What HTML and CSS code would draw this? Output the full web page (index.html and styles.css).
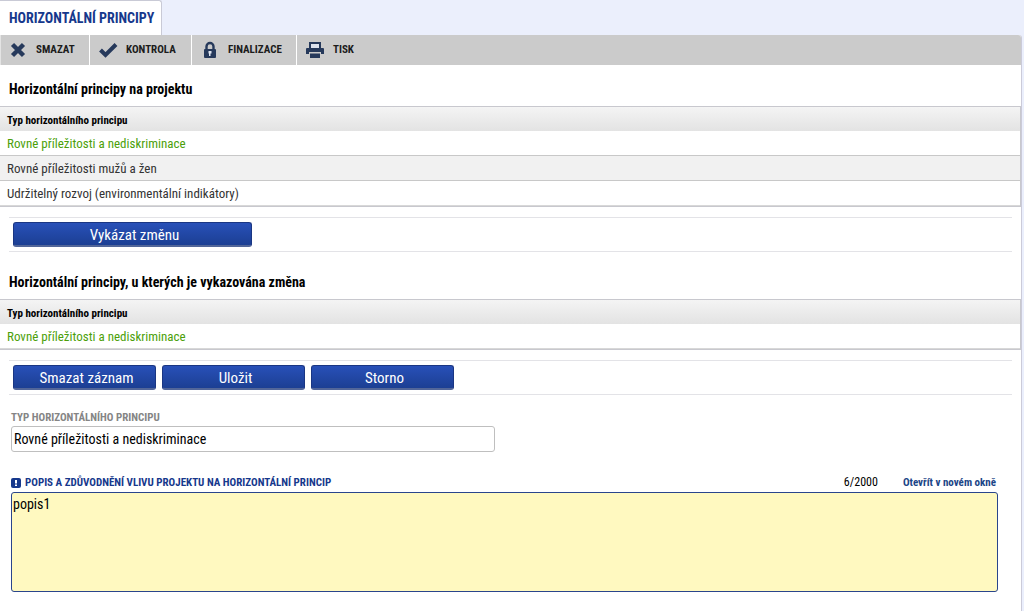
FILE: index.html
```html
<!DOCTYPE html>
<html lang="cs">
<head>
<meta charset="utf-8">
<title>Horizontální principy</title>
<link rel="stylesheet" href="styles.css">
</head>
<body>
<header class="tabs"><h1 class="tab">HORIZONTÁLNÍ PRINCIPY</h1></header>
<main class="panel">
  <nav class="toolbar">
    <button type="button" class="tool tool-delete"><svg class="icon" viewBox="0 0 20 20"><path d="M4.500 4.500l11 11M15.500 4.500l-11 11" fill="none" stroke="#26395b" stroke-width="4.400"/></svg>SMAZAT</button>
    <button type="button" class="tool tool-check"><svg class="icon" viewBox="0 0 20 20"><path d="M2.500 10l5 5L18 4.500" fill="none" stroke="#26395b" stroke-width="4"/></svg>KONTROLA</button>
    <button type="button" class="tool tool-lock"><svg class="icon" viewBox="0 0 20 20"><path d="M6.500 10V6.500a3.500 3.500 0 0 1 7 0V10" fill="none" stroke="#26395b" stroke-width="2.400"/><rect x="4" y="9" width="12" height="9" rx="1" fill="#26395b"/><path d="M8.500 11h3v2.500h-1V16H9v-2.500h-.5z" fill="#dfe6f2"/></svg>FINALIZACE</button>
    <button type="button" class="tool tool-print"><svg class="icon" viewBox="0 0 20 20"><path d="M5 8V3h10v5" fill="#dde3ee" stroke="#26395b" stroke-width="2"/><path d="M2 8h16a1 1 0 0 1 1 1v5h-3v-2H4v2H1V9a1 1 0 0 1 1-1z" fill="#26395b"/><path d="M5 13.500h10V18H5z" fill="#26395b"/></svg>TISK</button>
  </nav>

  <h2 class="heading">Horizontální principy na projektu</h2>
  <table class="grid">
    <thead><tr><th scope="col">Typ horizontálního principu</th></tr></thead>
    <tbody>
      <tr class="selected"><td>Rovné příležitosti a nediskriminace</td></tr>
      <tr class="alternate"><td>Rovné příležitosti mužů a žen</td></tr>
      <tr><td>Udržitelný rozvoj (environmentální indikátory)</td></tr>
    </tbody>
  </table>
  <div class="actions"><button type="button" class="action action-wide">Vykázat změnu</button></div>

  <h2 class="heading">Horizontální principy, u kterých je vykazována změna</h2>
  <table class="grid">
    <thead><tr><th scope="col">Typ horizontálního principu</th></tr></thead>
    <tbody><tr class="selected"><td>Rovné příležitosti a nediskriminace</td></tr></tbody>
  </table>
  <div class="actions">
    <button type="button" class="action">Smazat záznam</button>
    <button type="button" class="action">Uložit</button>
    <button type="button" class="action">Storno</button>
  </div>

  <form class="form">
    <label class="label" for="type">TYP HORIZONTÁLNÍHO PRINCIPU</label>
    <input class="field" id="type" type="text" value="Rovné příležitosti a nediskriminace">
    <div class="caption">
      <label class="label label-required" for="description"><svg class="mark" viewBox="0 0 10 10"><rect width="10" height="10" rx="2" fill="#16388c"/><path d="M4 2h2v3.500H4zM4 6.500h2V8H4z" fill="#fff"/></svg>POPIS A ZDŮVODNĚNÍ VLIVU PROJEKTU NA HORIZONTÁLNÍ PRINCIP</label>
      <span class="counter">6/2000</span>
      <a class="open" href="#description">Otevřít v novém okně</a>
    </div>
    <textarea class="description" id="description">popis1</textarea>
  </form>
</main>
</body>
</html>
```

FILE: styles.css
```css
* { box-sizing: border-box; }

body {
  margin: 0;
  background: #ebeffc;
  color: #000;
  font: 14px/20px "Roboto Condensed", "Liberation Sans Narrow", Roboto, sans-serif;
}

button, input, textarea { font: inherit; }

.tabs { display: flex; height: 35px; }

.tab {
  margin: 0;
  padding: 7px 7px 7px 9px;
  border: solid #c9cad6;
  border-width: 1px 1px 0 0;
  border-radius: 0 3px 0 0;
  background: #fff;
  color: #16388c;
  font-size: 14px;
  line-height: 20px;
}

.panel {
  min-height: calc(100vh - 35px);
  margin-right: 2px;
  border-right: 1px solid #cbcbd9;
  border-radius: 0 3px 0 0;
  background: #fff;
}

.toolbar {
  display: flex;
  height: 30px;
  border-radius: 0 3px 0 0;
  background: #cbcbcb;
}

.tool {
  display: flex;
  align-items: center;
  gap: 8px;
  padding: 0 8px;
  border: 0;
  border-left: 1px solid #fff;
  background: none;
  color: #1c1c1c;
  font-size: 11px;
  font-weight: bold;
}
.tool:first-child { padding-left: 7px; border-left-color: #e4e4e4; }
.tool-delete { width: 89px; }
.tool-check { width: 102px; }
.tool-lock { width: 105px; }
.icon { width: 20px; height: 20px; flex: none; }

.heading {
  margin: 0;
  padding: 14px 9px 7px;
  font-size: 14px;
  line-height: 20px;
}

.grid {
  width: 100%;
  border-collapse: separate;
  border-spacing: 0;
  border: solid #c8c8ce;
  border-width: 1px 1px 1px 0;
}
.grid th {
  height: 24px;
  padding: 3px 7px 0;
  background: linear-gradient(#f4f4f4, #e3e3e3);
  font-size: 11px;
  line-height: 20px;
  text-align: left;
}
.grid td {
  height: 25px;
  padding: 2px 7px 0;
  border-bottom: 1px solid #c8c8c8;
  color: #333;
  font-size: 13px;
}
.grid tr:last-child td { border-bottom-color: #d8d8d8; }
.grid .alternate td { background: #f1f1f1; }
.grid .selected td { color: #4c9f0a; }

.actions {
  display: flex;
  gap: 6px;
  margin: 10px 9px 6px;
  padding: 4px;
  border: solid #e3e3e7;
  border-width: 1px 0;
}
.action {
  width: 143px;
  height: 25px;
  padding: 2px 0 0 4px;
  border: 1px solid #1a3683;
  border-bottom: 2px solid #526699;
  border-radius: 3px;
  background: linear-gradient(#2850b8, #1c3f93);
  color: #fff;
  font-size: 15px;
  line-height: 20px;
}
.action-wide { width: 239px; }

.form { padding: 8px 23px 16px 11px; }
.label {
  display: block;
  color: #858585;
  font-size: 11px;
  font-weight: bold;
  line-height: 17px;
}
.field {
  display: block;
  width: 49%;
  height: 26px;
  padding: 0 2px;
  border: 1px solid #bfbfbf;
  border-radius: 3px;
  background: #fff;
}
.caption {
  display: flex;
  align-items: center;
  margin-top: 21px;
  padding-right: 2px;
  font-size: 11px;
  line-height: 19px;
}
.label-required {
  display: flex;
  align-items: center;
  gap: 4px;
  margin-right: auto;
  color: #16388c;
}
.mark { width: 10px; height: 10px; }
.counter { margin-right: 25px; font-size: 12px; }
.open { color: #1b4587; font-weight: bold; text-decoration: none; }
.description {
  display: block;
  width: 100%;
  height: 100px;
  padding: 1px;
  border: 1px solid #2a458c;
  border-radius: 3px;
  background: #fff9c0;
  resize: none;
}
```
